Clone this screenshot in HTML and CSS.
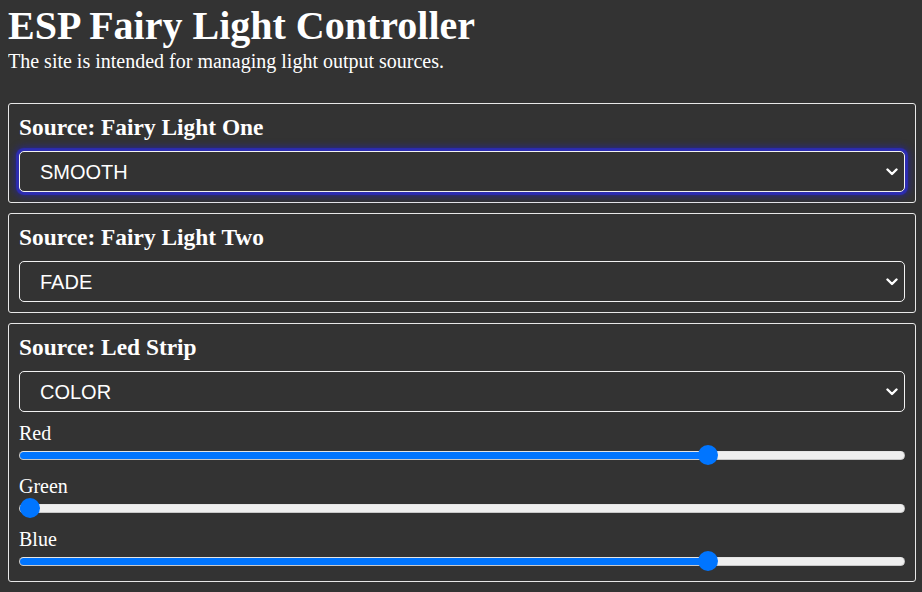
FILE: index.html
```html
<!DOCTYPE html>
<html lang="en">
<head>
<meta charset="utf-8">
<title>ESP Fairy Light Controller</title>
<link rel="stylesheet" href="styles.css">
</head>
<body>
<header class="page-header">
  <h1 class="title">ESP Fairy Light Controller</h1>
  <p class="intro">The site is intended for managing light output sources.</p>
</header>
<main class="sources">
  <section class="card">
    <h3 class="card-title">Source: Fairy Light One</h3>
    <div class="select-wrap">
      <select class="mode-select is-focused">
        <option>SMOOTH</option>
        <option>FADE</option>
        <option>COLOR</option>
      </select>
      <svg class="chevron" viewBox="0 0 12 8" width="12" height="8"><path d="M1.5 1.5 L6 6 L10.5 1.5" fill="none" stroke="#fff" stroke-width="2.4" stroke-linecap="round" stroke-linejoin="round"/></svg>
    </div>
  </section>
  <section class="card">
    <h3 class="card-title">Source: Fairy Light Two</h3>
    <div class="select-wrap">
      <select class="mode-select">
        <option>FADE</option>
        <option>SMOOTH</option>
        <option>COLOR</option>
      </select>
      <svg class="chevron" viewBox="0 0 12 8" width="12" height="8"><path d="M1.5 1.5 L6 6 L10.5 1.5" fill="none" stroke="#fff" stroke-width="2.4" stroke-linecap="round" stroke-linejoin="round"/></svg>
    </div>
  </section>
  <section class="card">
    <h3 class="card-title">Source: Led Strip</h3>
    <div class="select-wrap">
      <select class="mode-select">
        <option>COLOR</option>
        <option>SMOOTH</option>
        <option>FADE</option>
      </select>
      <svg class="chevron" viewBox="0 0 12 8" width="12" height="8"><path d="M1.5 1.5 L6 6 L10.5 1.5" fill="none" stroke="#fff" stroke-width="2.4" stroke-linecap="round" stroke-linejoin="round"/></svg>
    </div>
    <div class="slider">
      <label class="slider-label">Red</label>
      <input class="range" type="range" min="0" max="255" value="200" style="--pct: 0.7843">
    </div>
    <div class="slider">
      <label class="slider-label">Green</label>
      <input class="range" type="range" min="0" max="255" value="0" style="--pct: 0">
    </div>
    <div class="slider">
      <label class="slider-label">Blue</label>
      <input class="range" type="range" min="0" max="255" value="200" style="--pct: 0.7843">
    </div>
  </section>
</main>
</body>
</html>
```

FILE: styles.css
```css
html, body {
  background: #333333;
}
body {
  margin: 8px 6px 8px 8px;
  color: #ffffff;
  font-family: "Liberation Serif", "Times New Roman", serif;
}
.page-header {
  display: flex;
  flex-direction: column;
}
.title {
  margin: 0;
  font-size: 40px;
  line-height: 36px;
  font-weight: bold;
}
.intro {
  margin: 6px 0 30px;
  font-size: 20px;
  line-height: 23px;
}
.sources {
  display: flex;
  flex-direction: column;
  gap: 10px;
}
.card {
  border: 1px solid #e8e8e8;
  border-radius: 3px;
  padding: 10px;
  display: flex;
  flex-direction: column;
  gap: 10px;
}
.card-title {
  margin: 0;
  font-size: 23.4px;
  line-height: 27px;
  font-weight: bold;
}
.select-wrap {
  position: relative;
}
.mode-select {
  display: block;
  width: 100%;
  height: 41px;
  box-sizing: border-box;
  margin: 0;
  padding: 0 40px 0 20px;
  border: 1px solid #f2f2f2;
  border-radius: 5px;
  background: #333333;
  color: #ffffff;
  font-family: "Liberation Sans", Arial, sans-serif;
  font-size: 20px;
  appearance: none;
  -webkit-appearance: none;
  outline: none;
}
.mode-select.is-focused {
  box-shadow: 0 0 1px 3px #2c2cb2, 0 0 6px 5px rgba(36, 36, 160, 0.6);
}
.chevron {
  position: absolute;
  right: 7px;
  top: 50%;
  margin-top: -4px;
  width: 12px;
  height: 8px;
  pointer-events: none;
}
.slider {
  display: flex;
  flex-direction: column;
}
.slider-label {
  font-size: 20px;
  line-height: 23px;
}
.range {
  -webkit-appearance: none;
  appearance: none;
  display: block;
  width: 100%;
  height: 20px;
  margin: 0;
  background: transparent;
}
.range::-webkit-slider-runnable-track {
  height: 9px;
  box-sizing: border-box;
  border-radius: 5px;
  border: 1px solid #c8c8c8;
  border-top-color: #e6e6e6;
  background: linear-gradient(to right, #0075ff calc(10px + var(--pct) * (100% - 20px)), #efefef calc(10px + var(--pct) * (100% - 20px)));
}
.range::-webkit-slider-thumb {
  -webkit-appearance: none;
  appearance: none;
  width: 20px;
  height: 20px;
  border-radius: 50%;
  background: #0075ff;
  border: none;
  margin-top: -6.5px;
}
```
